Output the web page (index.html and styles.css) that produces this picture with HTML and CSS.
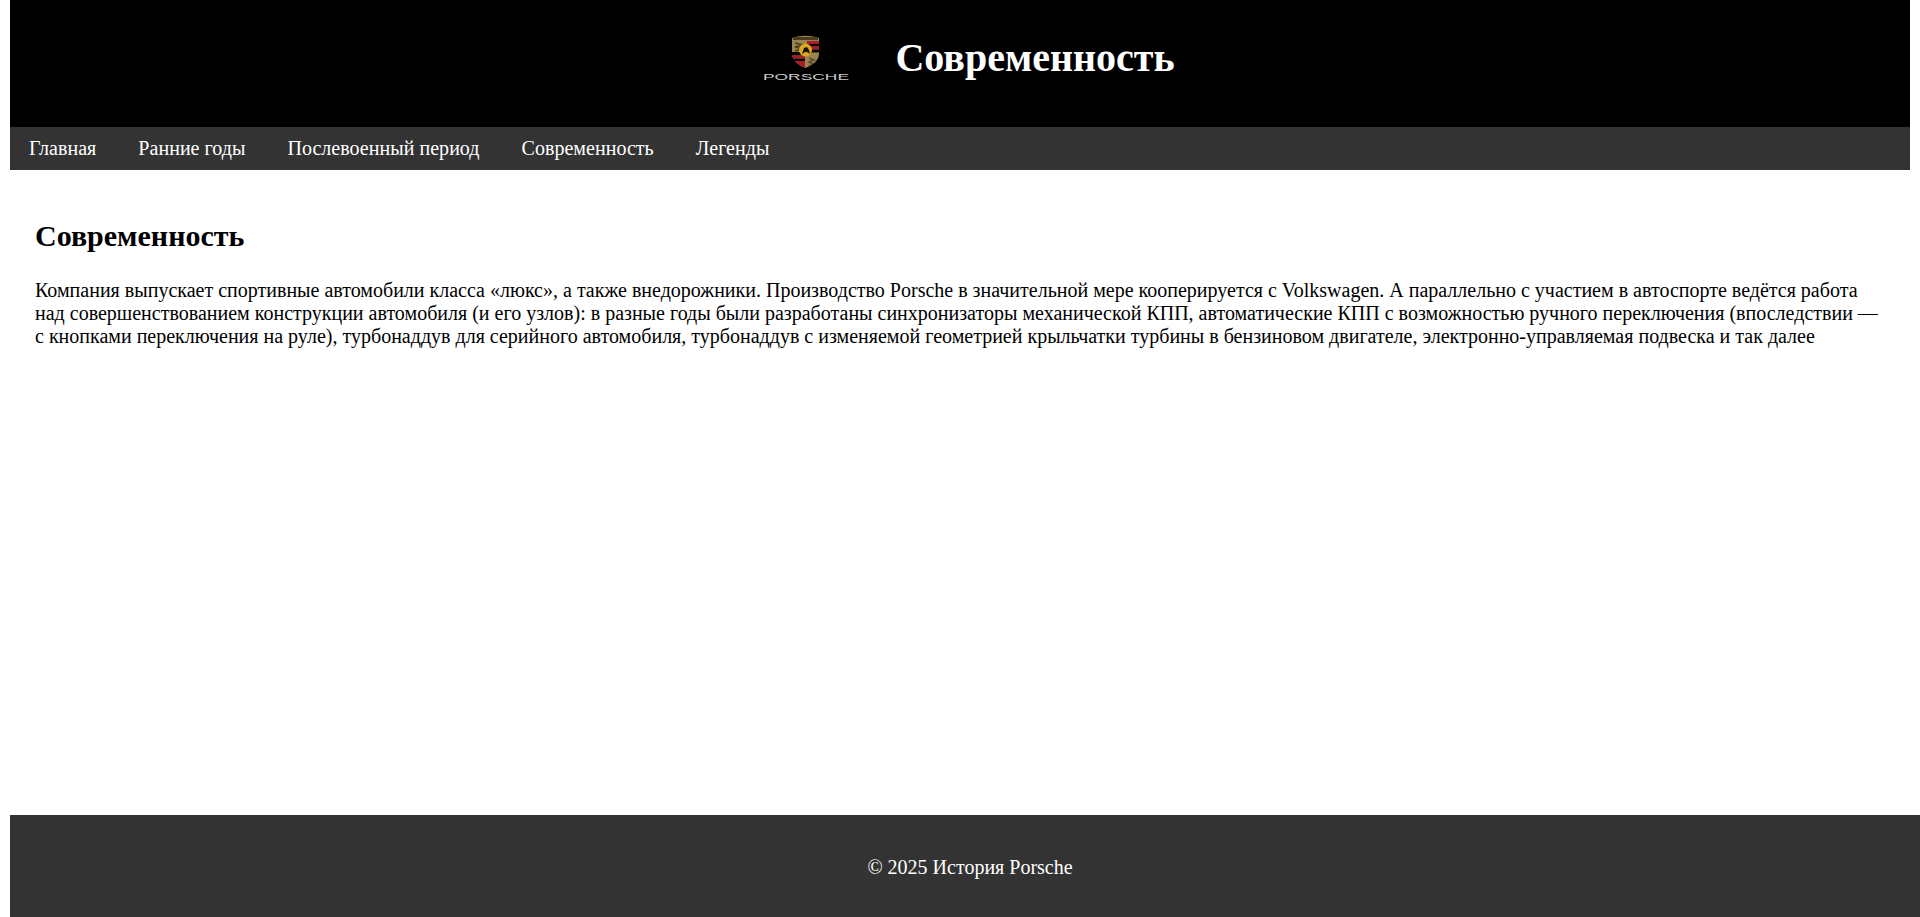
FILE: index.html
```html
<!DOCTYPE html>
<html lang="ru">
<head>
<meta charset="utf-8">
<title>Современность</title>
<link rel="stylesheet" href="styles.css">
</head>
<body>
<header class="header">
  <svg class="logo" viewBox="0 0 120 80" width="120" height="80">
    <defs>
      <clipPath id="crest"><path d="M47 20c9-3 18-3 27 0v16c0 6-6 11-13.500 14-7.500-3-13.500-8-13.500-14z"/></clipPath>
    </defs>
    <g clip-path="url(#crest)">
      <rect x="46" y="17" width="30" height="35" fill="#9a8450"/>
      <rect x="48" y="19" width="25" height="3" fill="#4a3c20"/>
      <path d="M50 25l8 2-8 2 8 2-8 2" fill="none" stroke="#4a3c20" stroke-width="1.500"/>
      <path d="M62 23h12v3H62z" fill="#a81e28"/>
      <path d="M62 26h12v2.500H62z" fill="#0c0806"/>
      <path d="M62 28.500h12v3H62z" fill="#a81e28"/>
      <path d="M62 31.500h12v3H62z" fill="#0c0806"/>
      <path d="M46 34h14v3.500H46z" fill="#0c0806"/>
      <path d="M46 37.500h14v3H46z" fill="#a81e28"/>
      <path d="M46 40.500h14v2.500H46z" fill="#0c0806"/>
      <path d="M46 43h14v8H46z" fill="#a81e28"/>
      <path d="M64 40l5 2-5 2 4 2-4 2" fill="none" stroke="#5a4a28" stroke-width="1.500"/>
    </g>
    <circle cx="60.500" cy="32" r="6.500" fill="#d8a820"/>
    <path d="M57 36l2-6 3-1 2 3 1 4-3-2-2 0z" fill="#1a1008"/>
    <text class="logo-text" x="18" y="62" textLength="86" lengthAdjust="spacingAndGlyphs">PORSCHE</text>
  </svg>
  <h1 class="title">Современность</h1>
</header>
<nav class="nav">
  <a href="#">Главная</a>
  <a href="#">Ранние годы</a>
  <a href="#">Послевоенный период</a>
  <a href="#">Современность</a>
  <a href="#">Легенды</a>
</nav>
<main class="content">
  <h2 class="heading">Современность</h2>
  <p class="text">Компания выпускает спортивные автомобили класса «люкс», а также внедорожники. Производство Porsche в значительной мере кооперируется с Volkswagen. А параллельно с участием в автоспорте ведётся работа над совершенствованием конструкции автомобиля (и его узлов): в разные годы были разработаны синхронизаторы механической КПП, автоматические КПП с возможностью ручного переключения (впоследствии — с&nbsp;кнопками переключения на руле), турбонаддув для серийного автомобиля, турбонаддув с изменяемой геометрией крыльчатки турбины в бензиновом двигателе, электронно-управляемая подвеска и так далее</p>
</main>
<footer class="footer">© 2025 История Porsche</footer>
</body>
</html>
```
FILE: styles.css
```css
html, body { height: 100%; }
body {
  margin: 0 0 0 10px;
  display: flex;
  flex-direction: column;
  font-family: "Liberation Serif", "Times New Roman", serif;
  font-size: 20px;
  color: #000;
  background: #fff;
}
.header {
  background: #000;
  color: #fff;
  height: 115px;
  padding-bottom: 12px;
  display: flex;
  justify-content: center;
  align-items: center;
  gap: 30px;
  margin-right: 10px;
}
.logo { display: block; }
.logo-text { font-family: "Liberation Sans", sans-serif; font-size: 8.4px; fill: #ccc; }
.title { margin: 0; font-size: 40px; font-weight: bold; }
.nav {
  background: #333;
  height: 43px;
  display: flex;
  align-items: center;
  gap: 42px;
  padding-left: 19px;
  margin-right: 10px;
}
.nav a { color: #fff; text-decoration: none; letter-spacing: 0.03px; }
.content { flex: 1; padding: 49px 35px 0 25px; }
.heading { margin: 0 0 26px; font-size: 30px; }
.text { margin: 0; }
.footer {
  background: #333;
  color: #fff;
  height: 100px;
  padding: 2px 0 0 10px;
  display: flex;
  justify-content: center;
  align-items: center;
}
```
